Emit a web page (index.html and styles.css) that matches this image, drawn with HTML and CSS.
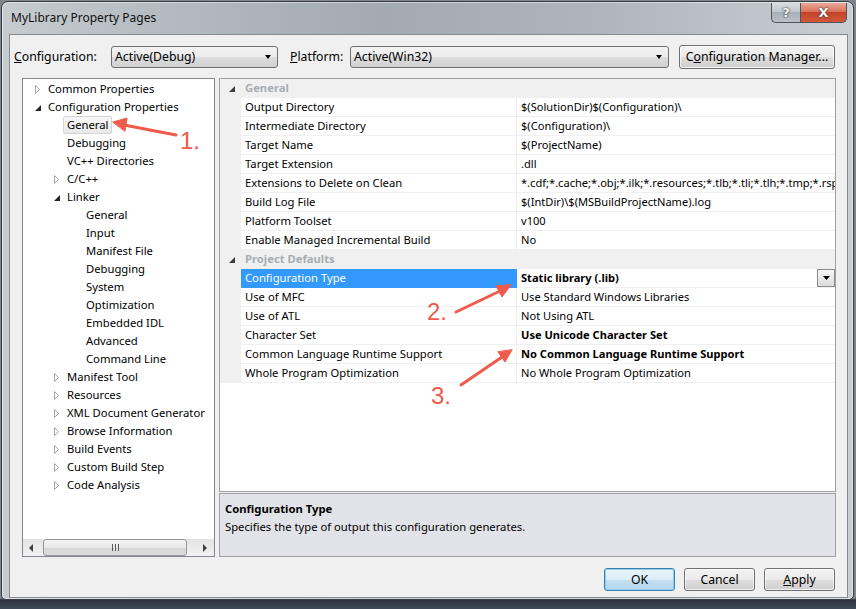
FILE: index.html
```html
<!DOCTYPE html>
<html lang="en">
<head>
    <meta charset="UTF-8">
    <title>MyLibrary Property Pages</title>
    <link rel="stylesheet" href="styles.css">
</head>
<body>
    <div class="window">
        <div class="titlebar">
            <span class="title">MyLibrary Property Pages</span>
            <div class="caption">
                <span class="cap-btn help">?</span>
                <span class="cap-btn close">X</span>
            </div>
        </div>

        <div class="client">
            <!-- Configuration / platform selectors -->
            <div class="toolbar">
                <span class="tb-label cfg-label"><u>C</u>onfiguration:</span>
                <div class="combo cfg-combo"><span>Active(Debug)</span><span class="combo-arrow"></span></div>
                <span class="tb-label plat-label"><u>P</u>latform:</span>
                <div class="combo plat-combo"><span>Active(Win32)</span><span class="combo-arrow"></span></div>
                <button class="btn cfg-mgr">C<u>o</u>nfiguration Manager...</button>
            </div>

            <div class="main">
                <div class="tree">
                    <ul class="tree-list">
                        <li class="l0"><svg class="exp" width="6" height="9"><path d="M0.5 0.5 L4.5 4.5 L0.5 8.5 Z" fill="none" stroke="#a6a6a6"/></svg>Common Properties</li>
                        <li class="l0"><svg class="exp" width="6" height="9"><path d="M6 2 L6 8 L0 8 Z" fill="#262626"/></svg>Configuration Properties</li>
                        <li class="l1"><span class="selected">General</span></li>
                        <li class="l1">Debugging</li>
                        <li class="l1">VC++ Directories</li>
                        <li class="l1x"><svg class="exp" width="6" height="9"><path d="M0.5 0.5 L4.5 4.5 L0.5 8.5 Z" fill="none" stroke="#a6a6a6"/></svg>C/C++</li>
                        <li class="l1x"><svg class="exp" width="6" height="9"><path d="M6 2 L6 8 L0 8 Z" fill="#262626"/></svg>Linker</li>
                        <li class="l2">General</li>
                        <li class="l2">Input</li>
                        <li class="l2">Manifest File</li>
                        <li class="l2">Debugging</li>
                        <li class="l2">System</li>
                        <li class="l2">Optimization</li>
                        <li class="l2">Embedded IDL</li>
                        <li class="l2">Advanced</li>
                        <li class="l2">Command Line</li>
                        <li class="l1x"><svg class="exp" width="6" height="9"><path d="M0.5 0.5 L4.5 4.5 L0.5 8.5 Z" fill="none" stroke="#a6a6a6"/></svg>Manifest Tool</li>
                        <li class="l1x"><svg class="exp" width="6" height="9"><path d="M0.5 0.5 L4.5 4.5 L0.5 8.5 Z" fill="none" stroke="#a6a6a6"/></svg>Resources</li>
                        <li class="l1x"><svg class="exp" width="6" height="9"><path d="M0.5 0.5 L4.5 4.5 L0.5 8.5 Z" fill="none" stroke="#a6a6a6"/></svg>XML Document Generator</li>
                        <li class="l1x"><svg class="exp" width="6" height="9"><path d="M0.5 0.5 L4.5 4.5 L0.5 8.5 Z" fill="none" stroke="#a6a6a6"/></svg>Browse Information</li>
                        <li class="l1x"><svg class="exp" width="6" height="9"><path d="M0.5 0.5 L4.5 4.5 L0.5 8.5 Z" fill="none" stroke="#a6a6a6"/></svg>Build Events</li>
                        <li class="l1x"><svg class="exp" width="6" height="9"><path d="M0.5 0.5 L4.5 4.5 L0.5 8.5 Z" fill="none" stroke="#a6a6a6"/></svg>Custom Build Step</li>
                        <li class="l1x"><svg class="exp" width="6" height="9"><path d="M0.5 0.5 L4.5 4.5 L0.5 8.5 Z" fill="none" stroke="#a6a6a6"/></svg>Code Analysis</li>
                    </ul>
                    <div class="hscroll">
                        <span class="sb-arrow"><svg width="5" height="8"><path d="M4 0 L0 4 L4 8 Z" fill="#404040"/></svg></span>
                        <div class="sb-track"><div class="sb-thumb"><span class="grip"></span><span class="grip"></span><span class="grip"></span></div></div>
                        <span class="sb-arrow"><svg width="5" height="8"><path d="M0 0 L4 4 L0 8 Z" fill="#404040"/></svg></span>
                    </div>
                </div>

                <div class="grid">
                    <div class="props">
                        <div class="cat"><span class="margin"><svg width="6" height="9"><path d="M6 2 L6 8 L0 8 Z" fill="#3c3c3c"/></svg></span><span class="cat-name">General</span></div>
                        <div class="row"><span class="margin"></span><span class="name">Output Directory</span><span class="val">$(SolutionDir)$(Configuration)\</span></div>
                        <div class="row"><span class="margin"></span><span class="name">Intermediate Directory</span><span class="val">$(Configuration)\</span></div>
                        <div class="row"><span class="margin"></span><span class="name">Target Name</span><span class="val">$(ProjectName)</span></div>
                        <div class="row"><span class="margin"></span><span class="name">Target Extension</span><span class="val">.dll</span></div>
                        <div class="row"><span class="margin"></span><span class="name">Extensions to Delete on Clean</span><span class="val">*.cdf;*.cache;*.obj;*.ilk;*.resources;*.tlb;*.tli;*.tlh;*.tmp;*.rsp;*.pgc;*.pgd</span></div>
                        <div class="row"><span class="margin"></span><span class="name">Build Log File</span><span class="val">$(IntDir)\$(MSBuildProjectName).log</span></div>
                        <div class="row"><span class="margin"></span><span class="name">Platform Toolset</span><span class="val">v100</span></div>
                        <div class="row"><span class="margin"></span><span class="name">Enable Managed Incremental Build</span><span class="val">No</span></div>
                        <div class="cat"><span class="margin"><svg width="6" height="9"><path d="M6 2 L6 8 L0 8 Z" fill="#3c3c3c"/></svg></span><span class="cat-name">Project Defaults</span></div>
                        <div class="row active"><span class="margin"></span><span class="name">Configuration Type</span><span class="val bold">Static library (.lib)<span class="val-drop"><svg width="7" height="4"><path d="M0 0 L7 0 L3.5 4 Z" fill="#000"/></svg></span></span></div>
                        <div class="row"><span class="margin"></span><span class="name">Use of MFC</span><span class="val">Use Standard Windows Libraries</span></div>
                        <div class="row"><span class="margin"></span><span class="name">Use of ATL</span><span class="val">Not Using ATL</span></div>
                        <div class="row"><span class="margin"></span><span class="name">Character Set</span><span class="val bold">Use Unicode Character Set</span></div>
                        <div class="row"><span class="margin"></span><span class="name">Common Language Runtime Support</span><span class="val bold">No Common Language Runtime Support</span></div>
                        <div class="row"><span class="margin"></span><span class="name">Whole Program Optimization</span><span class="val">No Whole Program Optimization</span></div>
                    </div>
                    <div class="desc">
                        <div class="desc-title">Configuration Type</div>
                        <div class="desc-text">Specifies the type of output this configuration generates.</div>
                    </div>
                </div>
            </div>

            <div class="footer">
                <button class="btn dlg-btn default">OK</button>
                <button class="btn dlg-btn">Cancel</button>
                <button class="btn dlg-btn"><u>A</u>pply</button>
            </div>
        </div>
    </div>

    <!-- red callouts drawn over the screenshot -->
    <svg class="marks" width="856" height="609">
        <g stroke="#f05a4c" stroke-width="3" stroke-linecap="round" fill="#f05a4c">
            <line x1="176" y1="135" x2="124" y2="125"/>
            <path d="M113 122 L127 118 L125 131 Z" stroke-width="1"/>
            <line x1="456" y1="312" x2="500" y2="291"/>
            <path d="M511 285 L502 297 L496 286 Z" stroke-width="1"/>
            <line x1="461" y1="385" x2="502" y2="357"/>
            <path d="M512 350 L505 362 L498 352 Z" stroke-width="1"/>
        </g>
        <text x="180" y="149" class="mark-num">1.</text>
        <text x="427" y="320" class="mark-num">2.</text>
        <text x="431" y="404" class="mark-num">3.</text>
    </svg>
</body>
</html>
```

FILE: styles.css
```css
* {
    box-sizing: border-box;
}
body {
    margin: 0;
    width: 856px;
    height: 609px;
    overflow: hidden;
    position: relative;
    background: linear-gradient(to bottom, #7d858d 0, #7d858d 598px, #2c3440 600px, #3e4a58 609px);
    font-family: "Noto Sans", "Liberation Sans", sans-serif;
    font-size: 11.25px;
    color: #000;
}
.window {
    width: 853px;
    height: 599px;
    margin: 1px 0 0 1px;
    border: 1px solid #3a4046;
    border-radius: 7px 7px 5px 5px;
    background: linear-gradient(to right, #c6ccd0 0, #b4bcc2 18%, #a2aab2 45%, #aeb5bc 70%, #c9ced3 100%);
    box-shadow: inset 0 0 0 1px rgba(255,255,255,0.45);
    display: flex;
    flex-direction: column;
}
.titlebar {
    height: 32px;
    display: flex;
    justify-content: space-between;
    align-items: flex-start;
    padding-left: 9px;
    flex-shrink: 0;
}
.title {
    font-size: 12px;
    line-height: 32px;
    color: #111;
}
.caption {
    display: flex;
    margin-top: 1px;
    margin-right: 6px;
}
.cap-btn {
    height: 20px;
    border: 1px solid #4e555c;
    border-top: none;
    color: #fff;
    font-family: "DejaVu Sans", sans-serif;
    font-weight: bold;
    font-size: 13px;
    line-height: 19px;
    text-align: center;
    text-shadow: 0 0 2px #333, 0 0 1px #222;
}
.help {
    width: 29px;
    border-radius: 0 0 0 5px;
    border-right: none;
    background: linear-gradient(to bottom, #d8dde2 0, #bfc6cd 45%, #a7b0b8 50%, #b9c1c8 100%);
}
.close {
    width: 47px;
    border-radius: 0 0 5px 0;
    background: linear-gradient(to bottom, #e9a99a 0, #d8735f 45%, #c2432a 50%, #d4583b 100%);
}
.client {
    flex: 1;
    margin: 0 5px 1px 7px;
    border: 1px solid #858b92;
    background: #f0f0f0;
    display: flex;
    flex-direction: column;
}

/* toolbar */
.toolbar {
    height: 43px;
    display: flex;
    align-items: center;
    padding: 0 12px 0 4px;
    font-size: 12.25px;
    flex-shrink: 0;
}
.tb-label {
    flex-shrink: 0;
}
.cfg-label {
    width: 97px;
}
.plat-label {
    width: 60px;
}
.combo {
    height: 22px;
    border: 1px solid #707070;
    border-radius: 3px;
    background: linear-gradient(to bottom, #f3f3f3 0, #ebebeb 50%, #dddddd 51%, #d0d0d0 100%);
    display: flex;
    align-items: center;
    justify-content: space-between;
    padding: 0 6px 0 3px;
    flex-shrink: 0;
}
.cfg-combo {
    width: 167px;
    margin-right: 12px;
}
.plat-combo {
    width: 319px;
}
.combo-arrow {
    width: 0;
    height: 0;
    border-left: 3.5px solid transparent;
    border-right: 3.5px solid transparent;
    border-top: 4px solid #000;
}
.btn {
    font-family: "Noto Sans", "Liberation Sans", sans-serif;
    font-size: 12.25px;
    color: #000;
    border: 1px solid #707070;
    border-radius: 3px;
    background: linear-gradient(to bottom, #f2f2f2 0, #ebebeb 50%, #dddddd 51%, #cfcfcf 100%);
    box-shadow: inset 0 0 0 1px rgba(255,255,255,0.7);
    padding: 0;
}
.cfg-mgr {
    width: 156px;
    height: 24px;
    margin-left: auto;
    flex-shrink: 0;
}

/* main area */
.main {
    height: 479px;
    display: flex;
    padding: 0 11px 0 12px;
    gap: 4px;
    flex-shrink: 0;
}
.tree {
    width: 193px;
    flex-shrink: 0;
    border: 1px solid #828790;
    background: #fff;
    display: flex;
    flex-direction: column;
    overflow: hidden;
}
.tree-list {
    list-style: none;
    margin: 0;
    padding: 1px 0 0;
    flex: 1;
}
.tree-list li {
    height: 18px;
    line-height: 18px;
    display: flex;
    align-items: center;
    white-space: nowrap;
}
.exp {
    flex-shrink: 0;
    margin-right: 7px;
}
.l0 {
    padding-left: 12px;
}
.l1 {
    padding-left: 44px;
}
.l1x {
    padding-left: 31px;
}
.l2 {
    padding-left: 63px;
}
.selected {
    margin-left: -4px;
    padding: 0 3px;
    height: 18px;
    line-height: 16px;
    border: 1px solid #d4d4d4;
    border-radius: 2px;
    background: linear-gradient(to bottom, #f8f8f8, #e9e9e9);
}
.hscroll {
    height: 17px;
    display: flex;
    background: linear-gradient(to bottom, #e3e3e3, #f2f2f2);
    flex-shrink: 0;
}
.sb-arrow {
    width: 17px;
    display: flex;
    align-items: center;
    justify-content: center;
}
.sb-track {
    flex: 1;
    padding: 0 3px 0 3px;
}
.sb-thumb {
    height: 17px;
    width: 144px;
    border: 1px solid #979797;
    border-radius: 3px;
    background: linear-gradient(to bottom, #f4f4f4 0, #e8e8e8 50%, #d6d6d6 51%, #dcdcdc 100%);
    display: flex;
    align-items: center;
    justify-content: center;
    gap: 2px;
}
.grip {
    width: 1px;
    height: 7px;
    background: #5a5a5a;
}

/* property grid */
.grid {
    width: 617px;
    flex-shrink: 0;
    display: flex;
    flex-direction: column;
    gap: 1px;
}
.props {
    height: 414px;
    border: 1px solid #a0a0a0;
    background: #fff;
    overflow: hidden;
}
.cat, .row {
    height: 19px;
    display: flex;
    white-space: nowrap;
}
.cat {
    background: #f0f0f0;
}
.margin {
    width: 21px;
    flex-shrink: 0;
    background: #f0f0f0;
    display: flex;
    align-items: center;
    justify-content: center;
}
.margin svg {
    margin-left: 2px;
}
.cat-name {
    padding-left: 4px;
    line-height: 18px;
    font-weight: bold;
    color: #a8adb4;
}
.name {
    width: 276px;
    flex-shrink: 0;
    padding-left: 4px;
    line-height: 18px;
    border-right: 1px solid #f0f0f0;
    border-bottom: 1px solid #f0f0f0;
}
.val {
    flex: 1;
    min-width: 0;
    padding-left: 4px;
    line-height: 18px;
    font-size: 11.1px;
    border-bottom: 1px solid #f0f0f0;
    overflow: hidden;
    position: relative;
}
.bold {
    font-weight: bold;
}
.active .name {
    background: #3399ff;
    color: #fff;
    border-color: #3399ff;
}
.val-drop {
    position: absolute;
    right: 0;
    top: 0;
    width: 18px;
    height: 18px;
    border: 1px solid #8d8d8d;
    background: linear-gradient(to bottom, #f7f7f7, #dcdcdc);
    display: flex;
    align-items: center;
    justify-content: center;
}
.desc {
    flex: 1;
    border: 1px solid #a0a0a0;
    background: #e2e3e8;
    padding: 6px 5px 0;
    line-height: 18px;
}
.desc-title {
    font-weight: bold;
}

/* dialog buttons */
.footer {
    flex: 1;
    display: flex;
    justify-content: flex-end;
    align-items: flex-start;
    padding: 11px 12px 0 0;
    gap: 9px;
}
.dlg-btn {
    width: 71px;
    height: 23px;
}
.default {
    border-color: #3c7fb1;
    background: linear-gradient(to bottom, #eaf5fc 0, #dcedf8 50%, #c4e0f2 51%, #b4d6ee 100%);
    box-shadow: inset 0 0 0 1px #8fd0f2;
}

.marks {
    position: absolute;
    left: 0;
    top: 0;
    pointer-events: none;
}
.mark-num {
    font-family: "Liberation Sans", sans-serif;
    font-size: 24px;
    fill: #f05a4c;
}
```
